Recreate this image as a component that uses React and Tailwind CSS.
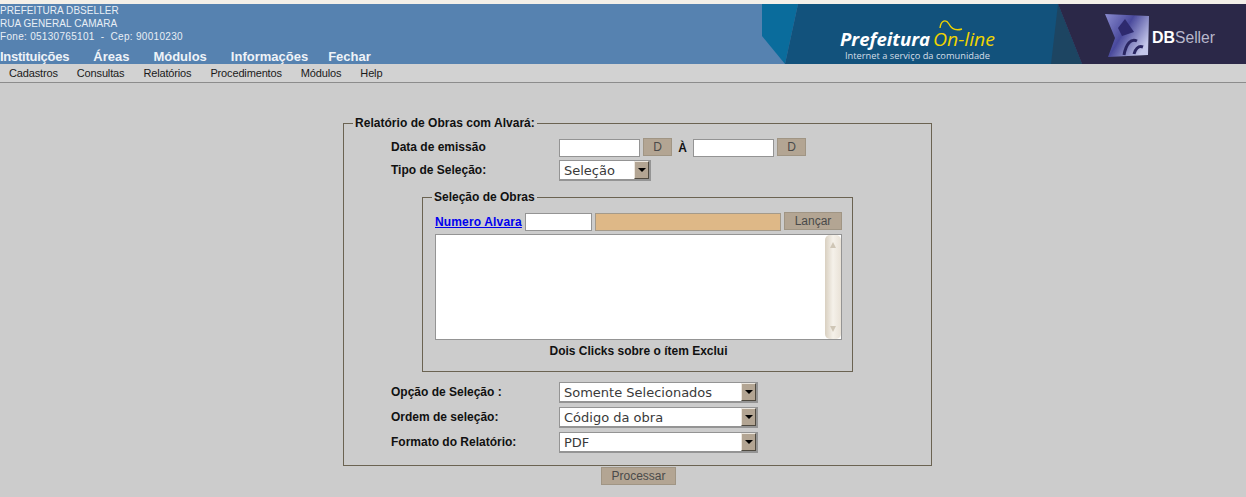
const TopMenu = [
  { label: 'Instituições', className: 'tracking-[-0.25px]' },
  { label: 'Áreas', className: '' },
  { label: 'Módulos', className: '' },
  { label: 'Informações', className: '' },
  { label: 'Fechar', className: '-ml-[4px]' },
];
const SubMenu = ['Cadastros', 'Consultas', 'Relatórios', 'Procedimentos', 'Módulos', 'Help'];

const Banner = () => (
  <svg width="484" height="60" viewBox="0 0 484 60" className="block shrink-0">
    <defs>
      <linearGradient id="cube" x1="0" y1="0" x2="1" y2="0.6">
        <stop offset="0" stopColor="#8a8cd0" />
        <stop offset="0.5" stopColor="#4a4a9c" />
        <stop offset="1" stopColor="#c4c7ea" />
      </linearGradient>
      <filter id="soft">
        <feGaussianBlur stdDeviation="0.5" />
      </filter>
    </defs>
    <polygon points="0,0 36,0 23,60 0,32" fill="#0a6c9c" />
    <polygon points="36,0 296,0 320,60 23,60" fill="#12527c" />
    <polygon points="296,0 320,60 289,60" fill="#1d4562" />
    <polygon points="296,0 484,0 484,60 320,60" fill="#2b2848" />
    {/* Prefeitura On-line */}
    <text x="78" y="42" fontFamily="'Open Sans', sans-serif" fontStyle="italic" fontWeight="700" fontSize="18" fill="#ffffff" textLength="90" lengthAdjust="spacingAndGlyphs">Prefeitura</text>
    <text x="171" y="42" fontFamily="'Open Sans', sans-serif" fontStyle="italic" fontSize="18" fill="#f0d400" textLength="62" lengthAdjust="spacingAndGlyphs">On-line</text>
    <path d="M178 24 C179 16 184 15 187 20 C190 26 194 27 200 25" fill="none" stroke="#f0d400" strokeWidth="1.4" />
    <text x="83" y="55" fontFamily="'Open Sans', sans-serif" fontSize="9" fill="#d5dfe8" textLength="145" lengthAdjust="spacingAndGlyphs">Internet a serviço da comunidade</text>
    {/* DBSeller */}
    <g filter="url(#soft)">
      <polygon points="343,10 387,12 386,51 346,53 353,34" fill="url(#cube)" />
      <polygon points="363,15 372,28 360,32 356,24" fill="#2d2a6e" />
      <path d="M362 51 C364 40 369 34 375 37 M372 50 C373 46 376 41 381 43" fill="none" stroke="#2a2762" strokeWidth="3" />
    </g>
    <text x="390" y="39" fontFamily="'Liberation Sans', sans-serif" fontWeight="700" fontSize="16" fill="#ffffff" textLength="23" lengthAdjust="spacingAndGlyphs">DB</text>
    <text x="413" y="39" fontFamily="'Liberation Sans', sans-serif" fontSize="16" fill="#b9b9cc" textLength="40" lengthAdjust="spacingAndGlyphs">Seller</text>
  </svg>
);

const TextInput = ({ className = '' }) => (
  <input type="text" readOnly className={`h-[18px] border border-[#949494] bg-white ${className}`} />
);

const Button = ({ children, className = '' }) => (
  <button className={`h-[18px] border border-[#a09584] bg-[#b3a593] text-center text-[12px] leading-none text-[#4a4a4a] ${className}`}>
    {children}
  </button>
);

const Select = ({ value, className = '' }) => (
  <div className={`flex h-[21px] items-stretch border border-r-2 border-b-2 border-[#949494] bg-white ${className}`}>
    <span className="flex-1 pl-[4px] font-['DejaVu_Sans'] text-[13px] leading-[19px] text-[#3a3a3a]">{value}</span>
    <span className="flex w-[15px] items-center justify-center border border-t-[#ece7df] border-l-[#ece7df] border-r-[#4f4a40] border-b-[#4f4a40] bg-[#b3a593]">
      <span className="h-0 w-0 border-x-[4px] border-t-[4px] border-x-transparent border-t-black" />
    </span>
  </div>
);

const FormRow = ({ label, className = '', children }) => (
  <div className={`flex items-center ${className}`}>
    <span className="-mt-[2px] w-[168px] shrink-0 font-bold">{label}</span>
    {children}
  </div>
);

const App = () => {
  return (
    <div className="h-[497px] w-[1246px] overflow-hidden bg-[#cccccc] font-['Liberation_Sans'] text-[12px] text-[#111111]">
      <div className="h-1 bg-[#f3efe8]" />

      {/* Header */}
      <div className="flex h-[60px] justify-between bg-[#5682b0]">
        <div className="flex flex-col">
          <div className="text-[10px] leading-[13px] tracking-[0.05px] text-[#e8eef5]">
            <div>PREFEITURA DBSELLER</div>
            <div>RUA GENERAL CAMARA</div>
            <div className="tracking-[0.3px]">Fone: 05130765101&nbsp; -&nbsp; Cep: 90010230</div>
          </div>
          <div className="mt-[6px] flex gap-[24px] text-[13px] font-bold leading-[15px] text-[#eef3f8]">
            {TopMenu.map(item => (
              <span key={item.label} className={item.className}>{item.label}</span>
            ))}
          </div>
        </div>
        <Banner />
      </div>

      {/* Menu */}
      <div className="flex h-[19px] items-center gap-[19px] border-b border-[#8c8c8c] bg-[#d2d2d2] pl-[9px] text-[11px] tracking-[-0.15px] text-[#1a1a1a]">
        {SubMenu.map((item, i) => (
          <span key={i}>{item}</span>
        ))}
      </div>

      {/* Form */}
      <div className="pt-[33px] pl-[343px]">
        <fieldset className="box-border h-[350px] w-[589px] min-w-0 border border-[#6b6352] pl-[47px]">
          <legend className="-ml-[38px] px-[2px] font-bold leading-[14px] tracking-[0.03px]">Relatório de Obras com Alvará:</legend>

          <FormRow label="Data de emissão" className="mt-[9px] h-[18px]">
            <TextInput className="w-[81px]" />
            <Button className="relative top-[-1px] ml-[3px] w-[29px]">D</Button>
            <span className="w-[21px] text-center font-bold">À</span>
            <TextInput className="w-[81px]" />
            <Button className="relative top-[-1px] ml-[3px] w-[29px]">D</Button>
          </FormRow>

          <FormRow label="Tipo de Seleção:" className="mt-[3px]">
            <Select value="Seleção" className="w-[92px]" />
          </FormRow>

          <fieldset className="mt-[9px] ml-[31px] box-border h-[182px] w-[431px] min-w-0 border border-[#6b6352] pr-[10px] pl-[12px]">
            <legend className="-ml-[3px] px-[2px] font-bold leading-[14px]">Seleção de Obras</legend>
            <div className="mt-[9px] flex items-center">
              <a href="#" className="w-[90px] font-bold tracking-[0.15px] text-[#0000ee] underline">Numero Alvara</a>
              <TextInput className="w-[67px]" />
              <input
                type="text"
                readOnly
                className="ml-[3px] h-[18px] w-[186px] border border-[#a49a8a] bg-[#deb887]"
              />
              <Button className="relative top-[-1px] ml-[3px] w-[58px]">Lançar</Button>
            </div>
            <div className="mt-[3px] flex h-[106px] w-[407px] border border-[#949494] bg-white">
              <div className="flex-1" />
              <div className="flex w-[16px] flex-col items-center justify-between rounded-[5px] bg-gradient-to-r from-[#d9d0c1] via-[#f5f1ea] to-[#e9e2d7] py-[7px]">
                <span className="h-0 w-0 border-x-[3px] border-b-[6px] border-x-transparent border-b-[#cfc6b6]" />
                <span className="h-0 w-0 border-x-[3px] border-t-[6px] border-x-transparent border-t-[#cfc6b6]" />
              </div>
            </div>
            <p className="mt-[4px] text-center font-bold leading-[14px]">Dois Clicks sobre o ítem Exclui</p>
          </fieldset>

          <FormRow label="Opção de Seleção :" className="mt-[10px]">
            <Select value="Somente Selecionados" className="w-[199px]" />
          </FormRow>
          <FormRow label="Ordem de seleção:" className="mt-[4px]">
            <Select value="Código da obra" className="w-[199px]" />
          </FormRow>
          <FormRow label="Formato do Relatório:" className="mt-[4px]">
            <Select value="PDF" className="w-[199px]" />
          </FormRow>
        </fieldset>
        <Button className="mt-[1px] ml-[258px] block w-[75px]">Processar</Button>
      </div>
    </div>
  );
};

export default App;
